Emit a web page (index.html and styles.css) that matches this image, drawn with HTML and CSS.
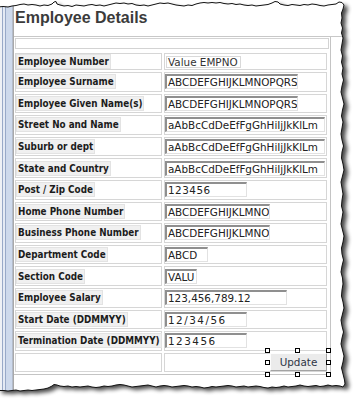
FILE: index.html
```html
<!DOCTYPE html>
<html>
<head>
<meta charset="utf-8">
<title>Employee Details</title>
<link rel="stylesheet" href="styles.css">
</head>
<body>
<div class="page">
  <div class="stripes"></div>
  <div class="main">
    <h1 class="title">Employee Details</h1>
    <div class="band">
      <div class="frame">
        <div class="header-box"></div>
        <table class="form">
          <tr class="r1"><td class="lc"><span class="lbl">Employee Number</span></td><td class="vc"><span class="val">Value EMPNO</span></td></tr>
          <tr class="ri"><td class="lc"><span class="lbl">Employee Surname</span></td><td class="vc"><span class="inp w133">ABCDEFGHIJKLMNOPQRS</span></td></tr>
          <tr class="ri"><td class="lc"><span class="lbl">Employee Given Name(s)</span></td><td class="vc"><span class="inp w133">ABCDEFGHIJKLMNOPQRS</span></td></tr>
          <tr class="ri"><td class="lc"><span class="lbl">Street No and Name</span></td><td class="vc"><span class="inp w160">aAbBcCdDeEfFgGhHiIjJkKlLm</span></td></tr>
          <tr class="ri"><td class="lc"><span class="lbl">Suburb or dept</span></td><td class="vc"><span class="inp w160">aAbBcCdDeEfFgGhHiIjJkKlLm</span></td></tr>
          <tr class="ri"><td class="lc"><span class="lbl">State and Country</span></td><td class="vc"><span class="inp w160">aAbBcCdDeEfFgGhHiIjJkKlLm</span></td></tr>
          <tr class="ri"><td class="lc"><span class="lbl">Post / Zip Code</span></td><td class="vc"><span class="inp w82 sp-s">123456</span></td></tr>
          <tr class="ri"><td class="lc"><span class="lbl">Home Phone Number</span></td><td class="vc"><span class="inp w105">ABCDEFGHIJKLMNO</span></td></tr>
          <tr class="ri"><td class="lc"><span class="lbl">Business Phone Number</span></td><td class="vc"><span class="inp w105">ABCDEFGHIJKLMNO</span></td></tr>
          <tr class="ri"><td class="lc"><span class="lbl">Department Code</span></td><td class="vc"><span class="inp w43">ABCD</span></td></tr>
          <tr class="ri"><td class="lc"><span class="lbl">Section Code</span></td><td class="vc"><span class="inp w32">VALU</span></td></tr>
          <tr class="ri"><td class="lc"><span class="lbl">Employee Salary</span></td><td class="vc"><span class="inp w122">123,456,789.12</span></td></tr>
          <tr class="ri"><td class="lc"><span class="lbl">Start Date (DDMMYY)</span></td><td class="vc"><span class="inp w82 sp-w">12/34/56</span></td></tr>
          <tr class="ri"><td class="lc"><span class="lbl">Termination Date (DDMMYY)</span></td><td class="vc"><span class="inp w82 sp-w">123456</span></td></tr>
          <tr class="re"><td class="lc"></td><td class="vc sel-cell">
            <div class="sel">
              <span class="btn">Update</span>
              <span class="h tl"></span><span class="h tm"></span><span class="h tr"></span>
              <span class="h ml"></span><span class="h mr"></span>
              <span class="h bl"></span><span class="h bm"></span><span class="h br"></span>
            </div>
          </td></tr>
        </table>
      </div>
    </div>
  </div>
  <svg class="tear" width="360" height="405" viewBox="0 0 360 405" aria-hidden="true">
    <defs>
      <path id="paper" d="M-2 7 L3 6.5 8 7 12 6 16 5.5 20 4.5 24 4 28 5 32 4.5 36 5 40 6 44 5 48 5.5 52 4 54 2 56 1.5 57 4 60 5 64 6 68 5.5 72 6.5 76 5 80 5.5 84 6 88 5 92 4.5 96 5.5 100 5 104 6 108 5 112 4 116 3 120 3.5 124 3 128 4 132 3.5 136 5 140 5.5 144 5 148 6 152 5 156 4 160 3 164 3.5 168 3 172 4 176 5 180 5.5 184 6 188 5 192 5.5 196 4 200 3 204 2.5 208 3 212 2.5 216 3 220 2.5 224 3.5 228 4 232 3.5 236 4.5 240 4 244 5 248 5.5 252 5 256 6 260 5.5 264 5 268 4.5 272 3 275 1.5 278 2 280 4 284 5 288 5.5 292 4.5 296 5 300 5.5 304 4.5 308 5 312 4 316 4.5 320 5.5 324 6 328 5 332 4.5 336 4 339 2 342 2.5 344 5 343 9 341.5 13 342 18 341 23 342.5 28 341.5 33 343 38 342 44 341 50 342.5 56 341.5 62 343 68 342 74 343.5 80 342 86 341 92 342.5 98 344 104 342.5 110 341.5 116 343 122 342 128 341 134 342 140 343.5 146 342 152 341.5 158 343 164 344 170 342.5 176 341 182 342 188 343 194 342 200 341.5 206 343 212 342 218 341 224 342.5 230 344 236 343 242 341.5 248 342 254 343.5 260 342 266 341 272 342.5 278 343 284 342 290 341.5 296 343 302 344 308 342.5 314 341 320 342 326 343.5 332 342 338 341 344 342.5 350 344 356 343 362 341.5 368 343 374 344.5 380 345 384 343 387 340 386 336 385.5 332 386 328 385 324 386 320 386.5 316 385.5 312 386 308 386.5 304 386 300 385 296 386 292 386.5 288 387 284 386 280 387 276 387.5 272 387 268 388 264 387.5 260 386.5 256 386 252 386.5 248 387 244 386 240 386.5 236 387 232 386 228 385.5 224 386 220 386.5 216 387 212 386.5 208 387.5 204 388 200 387 196 386.5 192 387 188 386 184 385.5 180 386 176 386.5 172 387 168 386 164 385.5 160 386 156 387 152 386 148 385 144 385.5 140 386 136 386.5 132 387 128 386 124 385 120 384.5 116 385 112 386 108 386.5 104 386 100 387 96 387.5 92 387 88 386 84 386.5 80 387 76 386.5 72 387 68 386 64 386.5 60 386 57 385 54 384.5 52 386 48 388 44 389 40 389.5 36 390 32 390.5 28 390 24 390.5 20 391 16 390 12 390.5 8 391 4 390.5 0 390.5 -2 391 Z"/>
      <mask id="outside" maskUnits="userSpaceOnUse" x="0" y="0" width="360" height="405">
        <rect width="360" height="405" fill="#fff"/>
        <use href="#paper" fill="#000"/>
      </mask>
      <filter id="blur" x="-20%" y="-20%" width="140%" height="140%">
        <feGaussianBlur stdDeviation="2.2"/>
      </filter>
    </defs>
    <g mask="url(#outside)">
      <rect width="360" height="405" fill="#fff"/>
      <use href="#paper" transform="translate(4 3)" fill="#000" opacity="0.72" filter="url(#blur)"/>
    </g>
    <use href="#paper" fill="none" stroke="#111" stroke-width="1"/>
  </svg>
</div>
</body>
</html>
```
FILE: styles.css
```css
html, body {
  margin: 0;
  padding: 0;
  background: #fff;
}

.page {
  position: relative;
  width: 360px;
  height: 405px;
  display: flex;
  overflow: hidden;
  background: #fff;
}

.stripes {
  flex: none;
  width: 13px;
  background: linear-gradient(to right,
    #eef1f6 0 2px,
    #98a9c8 2px 3px,
    #e4eaf4 3px 5px,
    #98a9c8 5px 6px,
    #cdd9ec 6px 12px,
    #b4bccb 12px 13px);
}

.main {
  flex: 1;
  border-left: 1px solid #a9a9a9;
}

.title {
  margin: 0;
  padding: 8px 0 8px 1px;
  font: 700 16px/20px "Liberation Sans", Arial, sans-serif;
  color: #3b3b3b;
}

.band {
  border-top: 1px solid #c8c8c8;
}

.frame {
  width: 314px;
  padding: 1px 1px 0 1px;
  border-right: 1px solid #c4c4c4;
  border-bottom: 1px solid #c4c4c4;
}

.header-box {
  box-sizing: border-box;
  height: 11px;
  border: 1px solid #d3d3d3;
}

.form {
  table-layout: fixed;
  width: 316px;
  margin: 2px -2px 0;
  border-collapse: separate;
  border-spacing: 2px;
}

.form td {
  box-sizing: border-box;
  border: 1px solid #d6d6d6;
  padding: 0;
  vertical-align: middle;
  font-size: 0;
  line-height: 0;
}

.lc { width: 147px; }
.vc { width: 163px; }

.r1 { height: 14px; }
.ri { height: 19.6px; }
.re { height: 19px; }

.lbl {
  display: inline-block;
  vertical-align: top;
  padding: 0 1px;
  border: 1px solid #e3e3e3;
  background: #f0f0f0;
  font: 700 9.8px/13px "DejaVu Sans Condensed", "DejaVu Sans", Verdana, sans-serif;
  color: #1c1c1c;
  white-space: nowrap;
}

.val {
  display: inline-block;
  vertical-align: top;
  box-sizing: border-box;
  width: 75px;
  height: 12px;
  margin-left: 1px;
  padding-left: 1px;
  border: 1px solid #d9d9d9;
  font: 10.4px/10px "DejaVu Sans", Verdana, sans-serif;
  color: #333;
  white-space: nowrap;
}

.inp {
  display: inline-block;
  vertical-align: top;
  box-sizing: border-box;
  height: 15px;
  padding: 0 1px;
  border-style: solid;
  border-width: 2px 1px 1px 2px;
  border-color: #8f8f8f #e2e2e2 #e2e2e2 #8f8f8f;
  font: 10.4px/12px "DejaVu Sans", Verdana, sans-serif;
  color: #222;
  white-space: nowrap;
  overflow: hidden;
}

.sp-s { letter-spacing: 0.5px; }
.sp-w { letter-spacing: 1.5px; }

.w32 { width: 32px; }
.w43 { width: 43px; }
.w82 { width: 82px; }
.w105 { width: 105px; }
.w122 { width: 122px; }
.w133 { width: 133px; }
.w160 { width: 160px; }

.sel-cell {
  position: relative;
}

.sel {
  position: absolute;
  left: 100px;
  top: -6px;
  width: 66px;
  height: 29px;
}

.btn {
  position: absolute;
  left: 5px;
  top: 5px;
  box-sizing: border-box;
  width: 57px;
  height: 18px;
  border: 1px solid;
  border-color: #fdfdfd #a3a3a3 #a3a3a3 #fdfdfd;
  background: #ebebeb;
  font: 10.4px/16px "DejaVu Sans", Verdana, sans-serif;
  color: #2e3444;
  text-align: center;
}

.h {
  position: absolute;
  box-sizing: border-box;
  width: 5px;
  height: 5px;
  border: 1px solid #000;
  background: #fff;
}

.tl { left: 0; top: 0; }
.tm { left: 30px; top: 0; }
.tr { right: 0; top: 0; }
.ml { left: 0; top: 12px; }
.mr { right: 0; top: 12px; }
.bl { left: 0; bottom: 0; }
.bm { left: 30px; bottom: 0; }
.br { right: 0; bottom: 0; }

.tear {
  position: absolute;
  left: 0;
  top: 0;
  pointer-events: none;
}
```
